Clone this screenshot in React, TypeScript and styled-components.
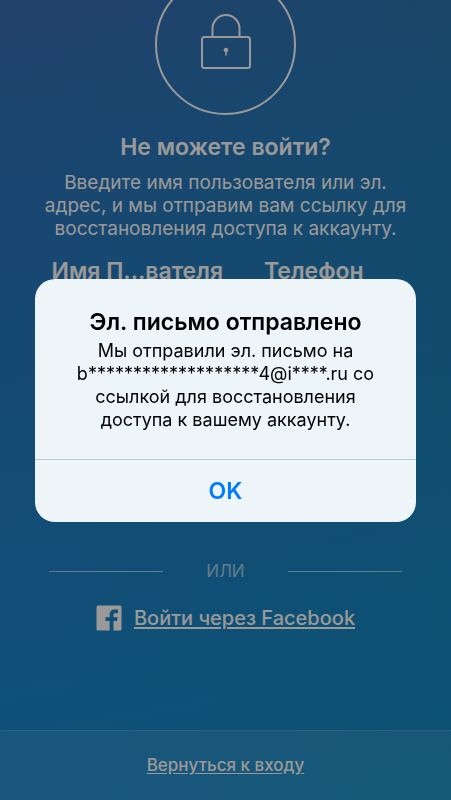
import React from "react";
import styled, { createGlobalStyle } from "styled-components";

const GlobalStyle = createGlobalStyle`
  *, *::before, *::after { box-sizing: border-box; }
  body { margin: 0; font-family: Inter, "Liberation Sans", sans-serif; }
  h1, h2, p { margin: 0; font-weight: 400; }
  button { font: inherit; border: 0; background: none; padding: 0; cursor: pointer; color: inherit; }
  a { color: inherit; text-underline-offset: 2px; }
`;

const Screen = styled.div`
  min-height: 100vh;
  display: flex;
  flex-direction: column;
  overflow: hidden;
  color: #fff;
  background:
    linear-gradient(90deg, rgba(0, 140, 130, 0) 10%, rgba(0, 140, 130, 0.14) 100%),
    linear-gradient(170deg, #3a6eb5 0%, #2c75ba 18%, #217dc2 50%, #168bcf 100%);
`;

const Content = styled.main`
  flex: 1;
  display: flex;
  flex-direction: column;
  padding: 0 49px;
`;

const LockBadge = styled.svg`
  display: block;
  flex: none;
  width: 142px;
  height: 142px;
  margin: -26px auto 0;
`;

const Title = styled.h1`
  margin-top: 16px;
  text-align: center;
  font-size: 23px;
  line-height: 30px;
  font-weight: 600;
`;

const Intro = styled.p`
  margin: 9px -8px 0;
  text-align: center;
  font-size: 19px;
  line-height: 23px;
`;

const Tabs = styled.div`
  display: grid;
  grid-template-columns: 1fr 1fr;
  height: 38px;
  margin-top: 12px;
`;

const Tab = styled.button`
  font-size: 23px;
  line-height: 30px;
  font-weight: 600;
  white-space: nowrap;
`;

const Divider = styled.div`
  display: flex;
  align-items: center;
  gap: 43px;
  margin-top: 269px;
  font-size: 17px;
  line-height: 24px;
  color: rgba(255, 255, 255, 0.6);

  &::before,
  &::after {
    content: "";
    flex: 1;
    height: 1px;
    background: currentColor;
  }
`;

const FacebookLink = styled.a`
  display: flex;
  justify-content: center;
  align-items: center;
  gap: 12px;
  margin-top: 22px;
  font-size: 20px;
  line-height: 26px;
  font-weight: 500;
  text-decoration: none;

  span { text-decoration: underline; text-decoration-thickness: 2px; }
`;

const Footer = styled.footer`
  display: flex;
  justify-content: center;
  padding: 24px 16px;
  border-top: 1px solid rgba(255, 255, 255, 0.18);
  background: rgba(255, 255, 255, 0.08);
  font-size: 17px;
  line-height: 21px;
  font-weight: 500;
`;

const Scrim = styled.div`
  position: fixed;
  inset: 0;
  display: flex;
  align-items: center;
  justify-content: center;
  padding: 0 35px;
  background: rgba(0, 0, 0, 0.4);
`;

const Alert = styled.section`
  flex: 1;
  max-width: 420px;
  border-radius: 20px;
  overflow: hidden;
  color: #000;
  background: #edf5f9;
  text-align: center;
`;

const AlertBody = styled.div`
  padding: 27px 36px 28px;
`;

const AlertTitle = styled.h2`
  font-size: 23px;
  line-height: 32px;
  font-weight: 600;
`;

const AlertText = styled.p`
  margin-top: 1px;
  font-size: 18px;
  line-height: 23px;
`;

const AlertButton = styled.button`
  display: block;
  width: 100%;
  height: 63px;
  border-top: 1px solid #b3cbd9;
  color: #007aff;
  font-size: 23px;
  font-weight: 600;
`;

export default function App() {
  return (
    <>
      <GlobalStyle />
      <Screen>
        <Content>
          <LockBadge viewBox="0 0 142 142" fill="none" stroke="#fff" strokeWidth="2" aria-hidden="true">
            <circle cx="70.5" cy="70.5" r="69.5" />
            <rect x="47" y="63" width="48" height="31" rx="2.5" />
            <path d="M57.500 63V54.500a13.500 13.500 0 0 1 27 0V63" />
            <circle cx="71" cy="76" r="2.300" fill="#fff" stroke="none" />
            <path d="M71 76v5.500" strokeWidth="1.500" />
          </LockBadge>
          <Title>Не можете войти?</Title>
          <Intro>
            Введите имя пользователя или эл. адрес, и мы отправим вам ссылку для
            восстановления доступа к аккаунту.
          </Intro>
          <Tabs>
            <Tab type="button">Имя П...вателя</Tab>
            <Tab type="button">Телефон</Tab>
          </Tabs>
          <Divider>ИЛИ</Divider>
          <FacebookLink href="#facebook">
            <svg width="26" height="26" viewBox="0 0 26 26" aria-hidden="true">
              <path
                fill="#fff"
                d="M2 .5h22A1.500 1.500 0 0 1 25.500 2v22a1.500 1.500 0 0 1-1.500 1.500h-6.500V16H21l.6-3.800h-4.100V10c0-1.200.7-1.800 1.900-1.800H22V4.600c-.8-.1-1.800-.2-3-.2-3.200 0-5.400 1.900-5.400 5.200v2.600H9.500V16h4.100v9.500H2A1.500 1.500 0 0 1 .5 24V2A1.500 1.500 0 0 1 2 .5Z"
              />
            </svg>
            <span>Войти через Facebook</span>
          </FacebookLink>
        </Content>
        <Footer>
          <a href="#login">Вернуться к входу</a>
        </Footer>
      </Screen>
      <Scrim>
        <Alert role="alertdialog" aria-modal="true" aria-labelledby="alert-title" aria-describedby="alert-text">
          <AlertBody>
            <AlertTitle id="alert-title">Эл. письмо отправлено</AlertTitle>
            <AlertText id="alert-text">
              Мы отправили эл. письмо на b*******************4@i****.ru со ссылкой для
              восстановления доступа к вашему аккаунту.
            </AlertText>
          </AlertBody>
          <AlertButton type="button">OK</AlertButton>
        </Alert>
      </Scrim>
    </>
  );
}
